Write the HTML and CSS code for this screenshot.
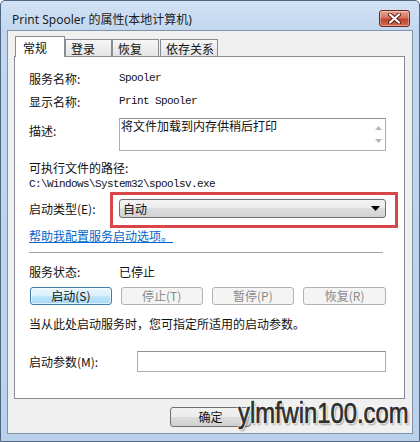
FILE: index.html
```html
<!DOCTYPE html>
<html lang="zh-CN">
<head>
<meta charset="utf-8">
<title>Print Spooler 的属性</title>
<link rel="stylesheet" href="styles.css">
</head>
<body>
<div class="window">
  <div class="titlebar">
    <span class="title">Print Spooler 的属性(本地计算机)</span>
    <span class="close">
      <svg width="13" height="11" viewBox="0 0 13 11"><path d="M2 1.5 L11 9.5 M11 1.5 L2 9.5" stroke="#5a1a10" stroke-width="4" stroke-linecap="round"/><path d="M2 1.5 L11 9.5 M11 1.5 L2 9.5" stroke="#fff" stroke-width="2.2" stroke-linecap="round"/></svg>
    </span>
  </div>
  <div class="client">
    <div class="tabs">
      <div class="tab active">常规</div>
      <div class="tab t2">登录</div>
      <div class="tab t3">恢复</div>
      <div class="tab t4">依存关系</div>
    </div>
    <div class="panel">
      <div class="field r1"><span class="label">服务名称:</span><span class="mono">Spooler</span></div>
      <div class="field r2"><span class="label">显示名称:</span><span class="mono">Print Spooler</span></div>
      <div class="desc-row">
        <span class="label desc-label">描述:</span>
        <div class="textarea">
          <span class="ta-text">将文件加载到内存供稍后打印</span>
          <span class="ta-scroll">
            <svg width="7" height="4" viewBox="0 0 7 4"><path d="M0 4 L3.5 0 L7 4Z" fill="#b8b8b8"/></svg>
            <svg width="7" height="4" viewBox="0 0 7 4"><path d="M0 0 L3.5 4 L7 0Z" fill="#b8b8b8"/></svg>
          </span>
        </div>
      </div>
      <div class="path-label">可执行文件的路径:</div>
      <div class="path mono">C:\Windows\System32\spoolsv.exe</div>
      <div class="field startup"><span class="label">启动类型(E):</span>
        <div class="select"><span>自动</span>
          <svg width="9" height="5" viewBox="0 0 9 5"><path d="M0 0 L9 0 L4.5 5Z" fill="#000"/></svg>
        </div>
      </div>
      <a class="help" href="#">帮助我配置服务启动选项。</a>
      <div class="sep"></div>
      <div class="field status"><span class="label">服务状态:</span><span>已停止</span></div>
      <div class="buttons">
        <button class="btn focus">启动(S)</button>
        <button class="btn disabled">停止(T)</button>
        <button class="btn disabled b3">暂停(P)</button>
        <button class="btn disabled b4">恢复(R)</button>
      </div>
      <div class="note">当从此处启动服务时，您可指定所适用的启动参数。</div>
      <div class="field params"><span class="label plabel">启动参数(M):</span><div class="input"></div></div>
      <div class="redbox"></div>
    </div>
    <div class="footer">
      <button class="btn ok">确定</button>
    </div>
  </div>
  <div class="watermark">ylmfwin100.com</div>
</div>
</body>
</html>
```

FILE: styles.css
```css
* { box-sizing: border-box; }
html, body { margin: 0; padding: 0; }
body {
  width: 420px;
  height: 442px;
  font-family: "Noto Sans CJK SC", "Noto Sans", sans-serif;
  font-size: 12px;
  color: #111;
  background: #fff;
}
.window {
  position: relative;
  width: 420px;
  height: 442px;
  border: 1px solid #4f6680;
  border-radius: 5px 5px 0 0;
  background: linear-gradient(#d2e2f5 0, #c2d7ef 30px, #bad1ec 100%);
  display: flex;
  flex-direction: column;
}
.titlebar {
  height: 29px;
  display: flex;
  align-items: flex-start;
  justify-content: space-between;
  padding: 0 9px 0 11px;
}
.title {
  font-family: "Noto Sans", "Noto Sans CJK SC", sans-serif;
  font-size: 12px;
  line-height: 16px;
  margin-top: 11px;
  color: #1e1e1e;
}
.close {
  margin-top: 9px;
  width: 31px;
  height: 17px;
  border: 1px solid #6e2a1e;
  border-radius: 3px;
  background: linear-gradient(#e8a594 0, #d47563 45%, #c0442f 55%, #cf6a4f 100%);
  display: flex;
  align-items: center;
  justify-content: center;
  box-shadow: inset 0 0 0 1px rgba(255,255,255,0.35);
}
.client {
  flex: 1;
  margin: 0 6px 7px 6px;
  border: 1px solid #7f93ab;
  background: #f0f0f0;
  display: flex;
  flex-direction: column;
}
.tabs {
  display: flex;
  align-items: flex-end;
  padding: 5px 0 0 7px;
  height: 25px;
  position: relative;
  z-index: 2;
}
.tab {
  height: 17px;
  border: 1px solid #898c95;
  border-bottom: none;
  background: linear-gradient(#f7f7f7, #e4e4e4);
  padding: 1px 0 0 5px;
  line-height: 15px;
  color: #111;
}
.tab.active {
  width: 50px;
  height: 21px;
  margin-bottom: -1px;
  background: #fff;
  padding: 3px 0 0 7px;
}
.t2 { width: 47px; }
.t3 { width: 47px; margin-left: 0; }
.t4 { width: 58px; margin-left: 1px; }
.panel {
  position: relative;
  margin-left: 6px;
  width: 391px;
  border: 1px solid #898c95;
  background: #fff;
  padding: 11px 18px 26px 14px;
  display: flex;
  flex-direction: column;
}
.field {
  display: flex;
  align-items: center;
  height: 20px;
}
.label { width: 90px; flex: none; }
.mono {
  font-family: "Liberation Mono", "Noto Sans CJK SC", monospace;
  font-size: 11px;
  letter-spacing: -0.6px;
  color: #111;
}
.r2 { margin-top: 3px; }
.desc-row {
  display: flex;
  align-items: flex-start;
  margin-top: 7px;
}
.desc-label { line-height: 20px; margin-top: 3px; }
.textarea {
  width: 267px;
  height: 33px;
  border: 1px solid #abadb3;
  border-top-color: #8e9297;
  display: flex;
  justify-content: space-between;
}
.ta-text { line-height: 14px; padding: 0 0 0 1px; }
.ta-scroll {
  width: 16px;
  display: flex;
  flex-direction: column;
  align-items: center;
  justify-content: space-between;
  padding: 7px 0 7px 2px;
}
.path-label { margin-top: 9px; line-height: 16px; }
.path { line-height: 16px; }
.startup { margin-top: 7px; height: 19px; }
.select {
  width: 267px;
  height: 19px;
  border: 1px solid #707070;
  border-radius: 3px;
  background: linear-gradient(#f3f3f3 0, #ebebeb 50%, #dddddd 50%, #d2d2d2 100%);
  display: flex;
  align-items: center;
  justify-content: space-between;
  padding: 0 5px 0 3px;
  line-height: 16px;
}
.help {
  margin-top: 10px;
  line-height: 16px;
  color: #0066cc;
  text-decoration: underline;
  align-self: flex-start;
}
.sep {
  margin-top: 8px;
  width: 354px;
  height: 1px;
  background: #a0a0a0;
}
.status { margin-top: 8px; }
.buttons {
  display: flex;
  margin-top: 6px;
  height: 18px;
}
.btn {
  font-family: "Noto Sans CJK SC", "Noto Sans", sans-serif;
  font-size: 12px;
  line-height: 14px;
  padding: 0;
  width: 82px;
  height: 18px;
  border: 1px solid #707070;
  border-radius: 3px;
  background: linear-gradient(#f2f2f2 0, #ebebeb 50%, #dddddd 50%, #cfcfcf 100%);
  color: #111;
}
.btn.focus {
  margin-left: 1px;
  border-color: #3c7fb1;
  background: linear-gradient(#eaf6fd 0, #d9f0fc 50%, #bee6fd 50%, #a7d9f5 100%);
  box-shadow: inset 0 0 0 1px rgba(255,255,255,0.6);
}
.btn.disabled {
  margin-left: 9px;
  border-color: #adb2b5;
  background: #f4f4f4;
  color: #8a8a8a;
}
.b3 { width: 83px; }
.b4 { margin-left: 10px; width: 83px; }
.note { margin-top: 11px; line-height: 16px; }
.params { margin-top: 19px; height: 21px; }
.plabel { width: 108px; }
.input {
  width: 249px;
  height: 21px;
  border: 1px solid #abadb3;
  border-top-color: #8e9297;
  background: #fff;
}
.redbox {
  position: absolute;
  left: 95px;
  top: 135px;
  width: 288px;
  height: 36px;
  border: 3px solid #d8464a;
}
.footer {
  padding: 8px 0 0 162px;
  display: flex;
}
.btn.ok { width: 81px; height: 20px; }
.watermark {
  position: absolute;
  left: 237px;
  top: 398px;
  font-family: "Liberation Sans", sans-serif;
  font-size: 29px;
  line-height: 29px;
  color: #2e2e2e;
  -webkit-text-stroke: 0.7px #2e2e2e;
  transform: scaleX(0.82);
  transform-origin: left top;
  white-space: nowrap;
  text-shadow: 1px 0 0 #fff, -1px 0 0 #fff, 0 1px 0 #fff, 0 -1px 0 #fff, 1px 1px 0 #fff, -1px -1px 0 #fff, 1px -1px 0 #fff, -1px 1px 0 #fff, 2px 2px 2px rgba(0,0,0,0.35);
}
```
